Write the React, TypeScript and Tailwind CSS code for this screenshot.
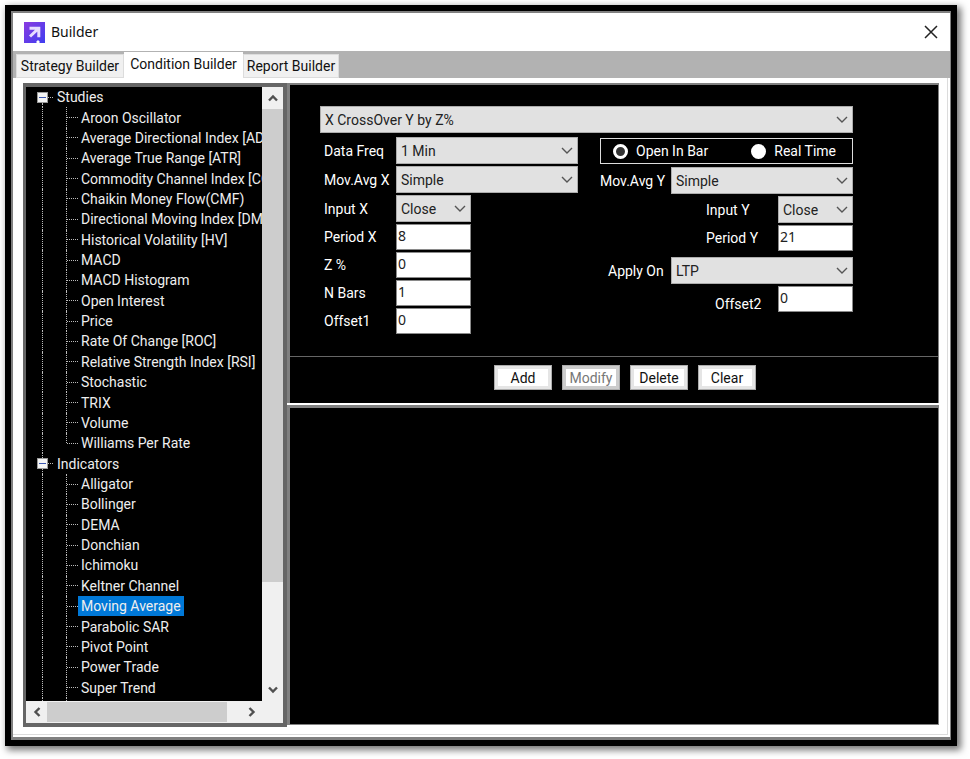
import React, { useState } from 'react'
import { clsx } from 'clsx'

interface TreeGroup {
  label: string
  items: string[]
  continues?: boolean
}

const TABS = [
  { label: 'Strategy Builder', width: 'w-[108px]' },
  { label: 'Condition Builder', width: 'w-[119px]' },
  { label: 'Report Builder', width: 'w-[96px]' },
]

const GROUPS: TreeGroup[] = [
  {
    label: 'Studies',
    items: [
      'Aroon Oscillator',
      'Average Directional Index [AD',
      'Average True Range [ATR]',
      'Commodity Channel Index [CC',
      'Chaikin Money Flow(CMF)',
      'Directional Moving Index [DMI',
      'Historical Volatility [HV]',
      'MACD',
      'MACD Histogram',
      'Open Interest',
      'Price',
      'Rate Of Change [ROC]',
      'Relative Strength Index [RSI]',
      'Stochastic',
      'TRIX',
      'Volume',
      'Williams Per Rate',
    ],
  },
  {
    label: 'Indicators',
    continues: true,
    items: [
      'Alligator',
      'Bollinger',
      'DEMA',
      'Donchian',
      'Ichimoku',
      'Keltner Channel',
      'Moving Average',
      'Parabolic SAR',
      'Pivot Point',
      'Power Trade',
      'Super Trend',
    ],
  },
]

type Direction = 'up' | 'down' | 'left' | 'right'

const CHEVRONS: Record<Direction, string> = {
  up: 'M2 8.5 6 4.5 10 8.5',
  down: 'M2 3.5 6 7.5 10 3.5',
  left: 'M8.5 2 4.5 6 8.5 10',
  right: 'M3.5 2 7.5 6 3.5 10',
}

const ScrollButton: React.FC<{ direction: Direction }> = ({ direction }) => (
  <button
    aria-label={`Scroll ${direction}`}
    className="flex h-[22px] w-[21px] shrink-0 items-center justify-center bg-[#f0f0f0]"
  >
    <svg width="12" height="12" viewBox="0 0 12 12" fill="none" stroke="#505050" strokeWidth="2.4">
      <path d={CHEVRONS[direction]} />
    </svg>
  </button>
)

interface SelectProps {
  id: string
  value: string
  className?: string
  label?: string
}

const Select: React.FC<SelectProps> = ({ id, value, className, label }) => (
  <div className={clsx('relative h-[27px]', className)}>
    <select
      id={id}
      aria-label={label}
      defaultValue={value}
      className="h-full w-full appearance-none border border-[#adadad] bg-[#e1e1e1] pl-1 pr-6 text-[#222]"
    >
      <option>{value}</option>
    </select>
    <svg
      className="pointer-events-none absolute right-[5px] top-2"
      width="12"
      height="11"
      viewBox="0 0 12 11"
      fill="none"
      stroke="#555"
      strokeWidth="1.4"
    >
      <path d="M1 3 6 8 11 3" />
    </svg>
  </div>
)

const TextBox: React.FC<{ id: string; value: string }> = ({ id, value }) => (
  <input
    id={id}
    type="text"
    defaultValue={value}
    className="h-[26px] w-[75px] border border-[#8a8a8a] bg-white pb-[3px] pl-px font-['Noto_Sans',sans-serif] text-[#222]"
  />
)

const Tree: React.FC = () => {
  const [selected, setSelected] = useState('Moving Average')

  return (
    <div role="tree" className="flex min-w-0 flex-1 flex-col overflow-hidden whitespace-nowrap">
      {GROUPS.map((group, groupIndex) => (
        <React.Fragment key={group.label}>
          <div role="treeitem" aria-expanded="true" className="flex min-h-5 flex-1 items-center pl-[11px]">
            <div className="flex w-[11px] flex-col items-center self-stretch">
              <span className={clsx('flex-1', groupIndex > 0 && 'border-l border-dotted border-[#bbb]')} />
              <button
                aria-label={`Collapse ${group.label}`}
                className="flex h-[11px] w-[11px] items-center justify-center border border-[#999] bg-[#f4f4f4]"
              >
                <span className="h-px w-[7px] bg-[#3b56b0]" />
              </button>
              <span className="flex-1 border-l border-dotted border-[#bbb]" />
            </div>
            <span className="w-[5px] border-t border-dotted border-[#bbb]" />
            <span className="pl-1">{group.label}</span>
          </div>

          {group.items.map((item, index) => (
            <div key={item} role="treeitem" className="flex min-h-5 flex-1 items-center pl-4">
              <span className="w-6 shrink-0 self-stretch border-l border-dotted border-[#bbb]" />
              <span
                className={clsx(
                  'w-px shrink-0 border-l border-dotted border-[#bbb]',
                  !group.continues && index === group.items.length - 1 ? 'h-[10px] self-start' : 'self-stretch'
                )}
              />
              <span className="w-[11px] shrink-0 border-t border-dotted border-[#bbb]" />
              <button
                onClick={() => setSelected(item)}
                className={clsx('self-stretch px-[3px]', item === selected && 'bg-[#0078d7]')}
              >
                {item}
              </button>
            </div>
          ))}
        </React.Fragment>
      ))}
      {/* start of the next, scrolled-out row */}
      <div className="flex h-[3px] pl-4">
        <span className="w-6 border-l border-dotted border-[#bbb]" />
        <span className="border-l border-dotted border-[#bbb]" />
      </div>
    </div>
  )
}

const TreePanel: React.FC = () => (
  <aside className="flex w-[264px] shrink-0 flex-col border-4 border-l-[3px] border-[#666] bg-black text-[#eee]">
    <div className="flex flex-1">
      <Tree />
      <div className="flex w-[21px] shrink-0 flex-col bg-[#f0f0f0]">
        <ScrollButton direction="up" />
        <div className="flex-1">
          <div className="h-[83%] bg-[#cdcdcd]" />
        </div>
        <ScrollButton direction="down" />
      </div>
    </div>
    <div className="flex bg-[#f0f0f0] pr-[21px]">
      <ScrollButton direction="left" />
      <div className="flex-1 py-px">
        <div className="h-full w-[93%] bg-[#cdcdcd]" />
      </div>
      <ScrollButton direction="right" />
    </div>
  </aside>
)

const RADIO =
  'h-[15px] w-[15px] appearance-none rounded-full border-[3px] border-white bg-white checked:bg-[#333]'

const ConditionForm: React.FC = () => (
  <form className="flex-1 pl-[30px] pr-5 pt-[21px] text-white">
    <div className="max-w-[533px]">
      <Select id="condition" label="Condition" value="X CrossOver Y by Z%" />
      <div className="mt-1 flex gap-[22px]">
        <div className="grid w-[258px] shrink-0 grid-cols-[72px_1fr] items-center gap-x-1 gap-y-[2px]">
          <label htmlFor="dataFreq" className="pl-1">Data Freq</label>
          <Select id="dataFreq" value="1 Min" />
          <label htmlFor="avgX" className="pl-1">Mov.Avg X</label>
          <Select id="avgX" value="Simple" />
          <label htmlFor="inputX" className="pl-1">Input X</label>
          <Select id="inputX" value="Close" className="w-[75px]" />
          <label htmlFor="periodX" className="pl-1">Period X</label>
          <TextBox id="periodX" value="8" />
          <label htmlFor="zPercent" className="pl-1">Z %</label>
          <TextBox id="zPercent" value="0" />
          <label htmlFor="nBars" className="pl-1">N Bars</label>
          <TextBox id="nBars" value="1" />
          <label htmlFor="offset1" className="pl-1">Offset1</label>
          <TextBox id="offset1" value="0" />
        </div>

        <div className="flex min-w-0 flex-1 flex-col">
          <div className="mt-px flex h-[26px] items-center justify-between border border-[#ddd] pl-3 pr-4">
            <label className="flex items-center gap-2">
              <input type="radio" name="timing" defaultChecked className={RADIO} />
              Open In Bar
            </label>
            <label className="flex items-center gap-2">
              <input type="radio" name="timing" className={RADIO} />
              Real Time
            </label>
          </div>
          <div className="mt-[3px] flex items-center justify-between">
            <label htmlFor="avgY">Mov.Avg Y</label>
            <Select id="avgY" value="Simple" className="w-[182px]" />
          </div>
          <div className="mt-[2px] flex items-center justify-end">
            <label htmlFor="inputY" className="w-[72px]">Input Y</label>
            <Select id="inputY" value="Close" className="w-[75px]" />
          </div>
          <div className="mt-[2px] flex items-center justify-end">
            <label htmlFor="periodY" className="w-[72px]">Period Y</label>
            <TextBox id="periodY" value="21" />
          </div>
          <div className="mt-[6px] flex items-center justify-between pl-2">
            <label htmlFor="applyOn">Apply On</label>
            <Select id="applyOn" value="LTP" className="w-[182px]" />
          </div>
          <div className="mt-[2px] flex items-start justify-end">
            <label htmlFor="offset2" className="w-[63px] pt-2">Offset2</label>
            <TextBox id="offset2" value="0" />
          </div>
        </div>
      </div>
    </div>
  </form>
)

const ACTIONS = ['Add', 'Modify', 'Delete', 'Clear']

const ActionBar: React.FC = () => (
  <div className="flex h-[47px] items-center justify-center gap-[10px] border-t border-[#666] pb-[5px] pl-[22px]">
    {ACTIONS.map((action) => (
      <button
        key={action}
        disabled={action === 'Modify'}
        className="h-[25px] w-[58px] border border-[#adadad] bg-[#e5e5e5] p-[3px] text-[#111] disabled:bg-[#ccc] disabled:text-[#777]"
      >
        <span className="flex h-full items-center justify-center bg-white">{action}</span>
      </button>
    ))}
  </div>
)

const App: React.FC = () => {
  const [activeTab, setActiveTab] = useState('Condition Builder')

  return (
    <div className="flex min-h-screen bg-white pb-[13px] pl-[5px] pr-[13px] pt-[5px] font-[Roboto,sans-serif] text-[14px] leading-5">
      <div className="flex flex-1 flex-col bg-black p-[6px] shadow-[3px_3px_7px_1px_rgba(0,0,0,0.55)]">
        <div className="flex flex-1 flex-col border-2 border-b-[3px] border-r border-[#808080] bg-white">
          {/* Title bar */}
          <header className="flex h-[38px] items-center pl-[11px] pr-3">
            <svg width="21" height="21" viewBox="0 0 21 21" aria-hidden="true">
              <defs>
                <linearGradient id="logo" x1="0" y1="0" x2="1" y2="1">
                  <stop offset="0" stopColor="#8a3be0" />
                  <stop offset="1" stopColor="#3f3df0" />
                </linearGradient>
              </defs>
              <rect width="21" height="21" fill="url(#logo)" />
              <path d="M5.5 6.2h9.3v9M14.3 6.7 6 14.5" fill="none" stroke="#e6dcff" strokeWidth="3" />
              <path d="M12.5 21v-1.5l1.5-1.5 1.5 1.5V21z" fill="#fff" />
            </svg>
            <h1 className="pl-[6px] font-['Noto_Sans',sans-serif] text-[14px] text-[#111]">Builder</h1>
            <button aria-label="Close" className="ml-auto">
              <svg width="14" height="14" viewBox="0 0 14 14" stroke="#222" strokeWidth="1.5">
                <path d="M1 1 13 13M13 1 1 13" />
              </svg>
            </button>
          </header>

          {/* Tabs */}
          <nav role="tablist" className="flex h-[27px] items-end bg-[#b2b2b2] pl-[3px]">
            {TABS.map(({ label, width }) => (
              <button
                key={label}
                role="tab"
                aria-selected={label === activeTab}
                onClick={() => setActiveTab(label)}
                className={clsx(
                  'whitespace-nowrap border text-[#111]',
                  width,
                  label === activeTab ? 'h-[26px] border-white bg-white pb-[2px]' : 'h-6 border-[#dcdcdc] bg-[#f0f0f0]'
                )}
              >
                {label}
              </button>
            ))}
          </nav>

          <main className="mb-[2px] mr-[2px] flex flex-1 border-b border-r border-[#dcdcdc] pb-[7px] pl-[10px] pr-2 pt-[5px]">
            <TreePanel />
            <section className="mb-[2px] flex min-w-0 flex-1 flex-col">
              <div className="flex min-h-[320px] flex-col border-l-[3px] border-r border-t-2 border-[#808080] bg-black">
                <ConditionForm />
                <ActionBar />
              </div>
              <div className="mt-[2px] flex-1 border border-l-[3px] border-t-[3px] border-[#808080] bg-black" />
            </section>
          </main>
        </div>
      </div>
    </div>
  )
}

export default App
